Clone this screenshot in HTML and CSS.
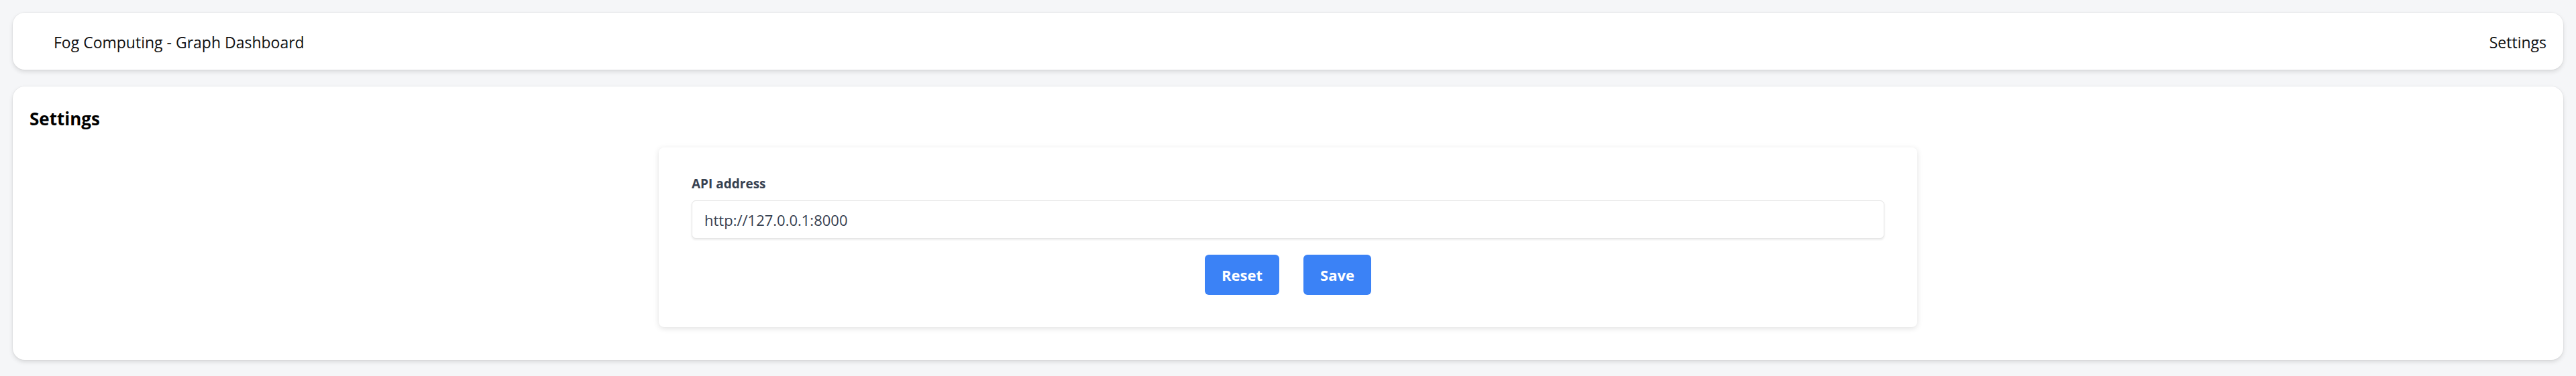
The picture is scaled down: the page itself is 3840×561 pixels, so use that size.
FILE: index.html
```html
<!DOCTYPE html>
<html lang="en">
<head>
<meta charset="utf-8">
<title>Fog Computing - Graph Dashboard</title>
<link rel="stylesheet" href="styles.css">
</head>
<body>
<div class="page">
  <header class="topbar">
    <div class="brand">Fog Computing - Graph Dashboard</div>
    <nav class="nav"><a class="nav-link">Settings</a></nav>
  </header>
  <main class="panel">
    <h1 class="panel-title">Settings</h1>
    <section class="form-card">
      <label class="field-label" for="api">API address</label>
      <input class="field-input" id="api" type="text" value="http://127.0.0.1:8000">
      <div class="actions">
        <button class="btn">Reset</button>
        <button class="btn">Save</button>
      </div>
    </section>
  </main>
</div>
</body>
</html>
```
FILE: styles.css
```css
* { box-sizing: border-box; }
html, body { margin: 0; padding: 0; }
body {
  background: #f5f6f8;
  font-family: "Open Sans", "Noto Sans", sans-serif;
  color: #111;
}
.page {
  padding: 19px 19px 24px 19px;
  display: flex;
  flex-direction: column;
  gap: 25px;
}
.topbar {
  height: 85px;
  background: #fff;
  border-radius: 18px;
  box-shadow: 0 0 0 1px rgba(0,0,0,0.03), 0 3px 6px rgba(0,0,0,0.12);
  display: flex;
  align-items: center;
  justify-content: space-between;
  padding: 3px 25px 0 61px;
}
.brand { font-size: 23px; color: #111; }
.nav-link { font-size: 23px; color: #111; }
.panel {
  background: #fff;
  border-radius: 18px;
  box-shadow: 0 0 0 1px rgba(0,0,0,0.03), 0 3px 6px rgba(0,0,0,0.12);
  padding: 30px 25px 49px 25px;
  display: flex;
  flex-direction: column;
  align-items: center;
}
.panel-title {
  align-self: flex-start;
  margin: 0 0 25px 0;
  font-size: 26px;
  line-height: 36px;
  font-weight: 700;
  color: #000;
}
.form-card {
  width: 1876px;
  background: #fff;
  border-radius: 8px;
  box-shadow: 0 2px 8px rgba(0,0,0,0.12);
  padding: 42px 49px 48px 49px;
  display: flex;
  flex-direction: column;
}
.field-label {
  font-size: 19px;
  font-weight: 700;
  color: #374151;
  line-height: 24px;
  margin-bottom: 13px;
}
.field-input {
  height: 57px;
  border: 1px solid #e3e3e3;
  border-radius: 6px;
  box-shadow: 0 2px 3px rgba(0,0,0,0.08);
  padding: 0 18px;
  font-family: inherit;
  font-size: 22px;
  color: #374151;
  outline: none;
}
.actions {
  display: flex;
  justify-content: center;
  gap: 36px;
  margin-top: 24px;
}
.btn {
  height: 60px;
  padding: 0 25px;
  background: #3b82f6;
  color: #fff;
  border: none;
  border-radius: 6px;
  font-family: inherit;
  font-size: 22px;
  font-weight: 700;
}
```
